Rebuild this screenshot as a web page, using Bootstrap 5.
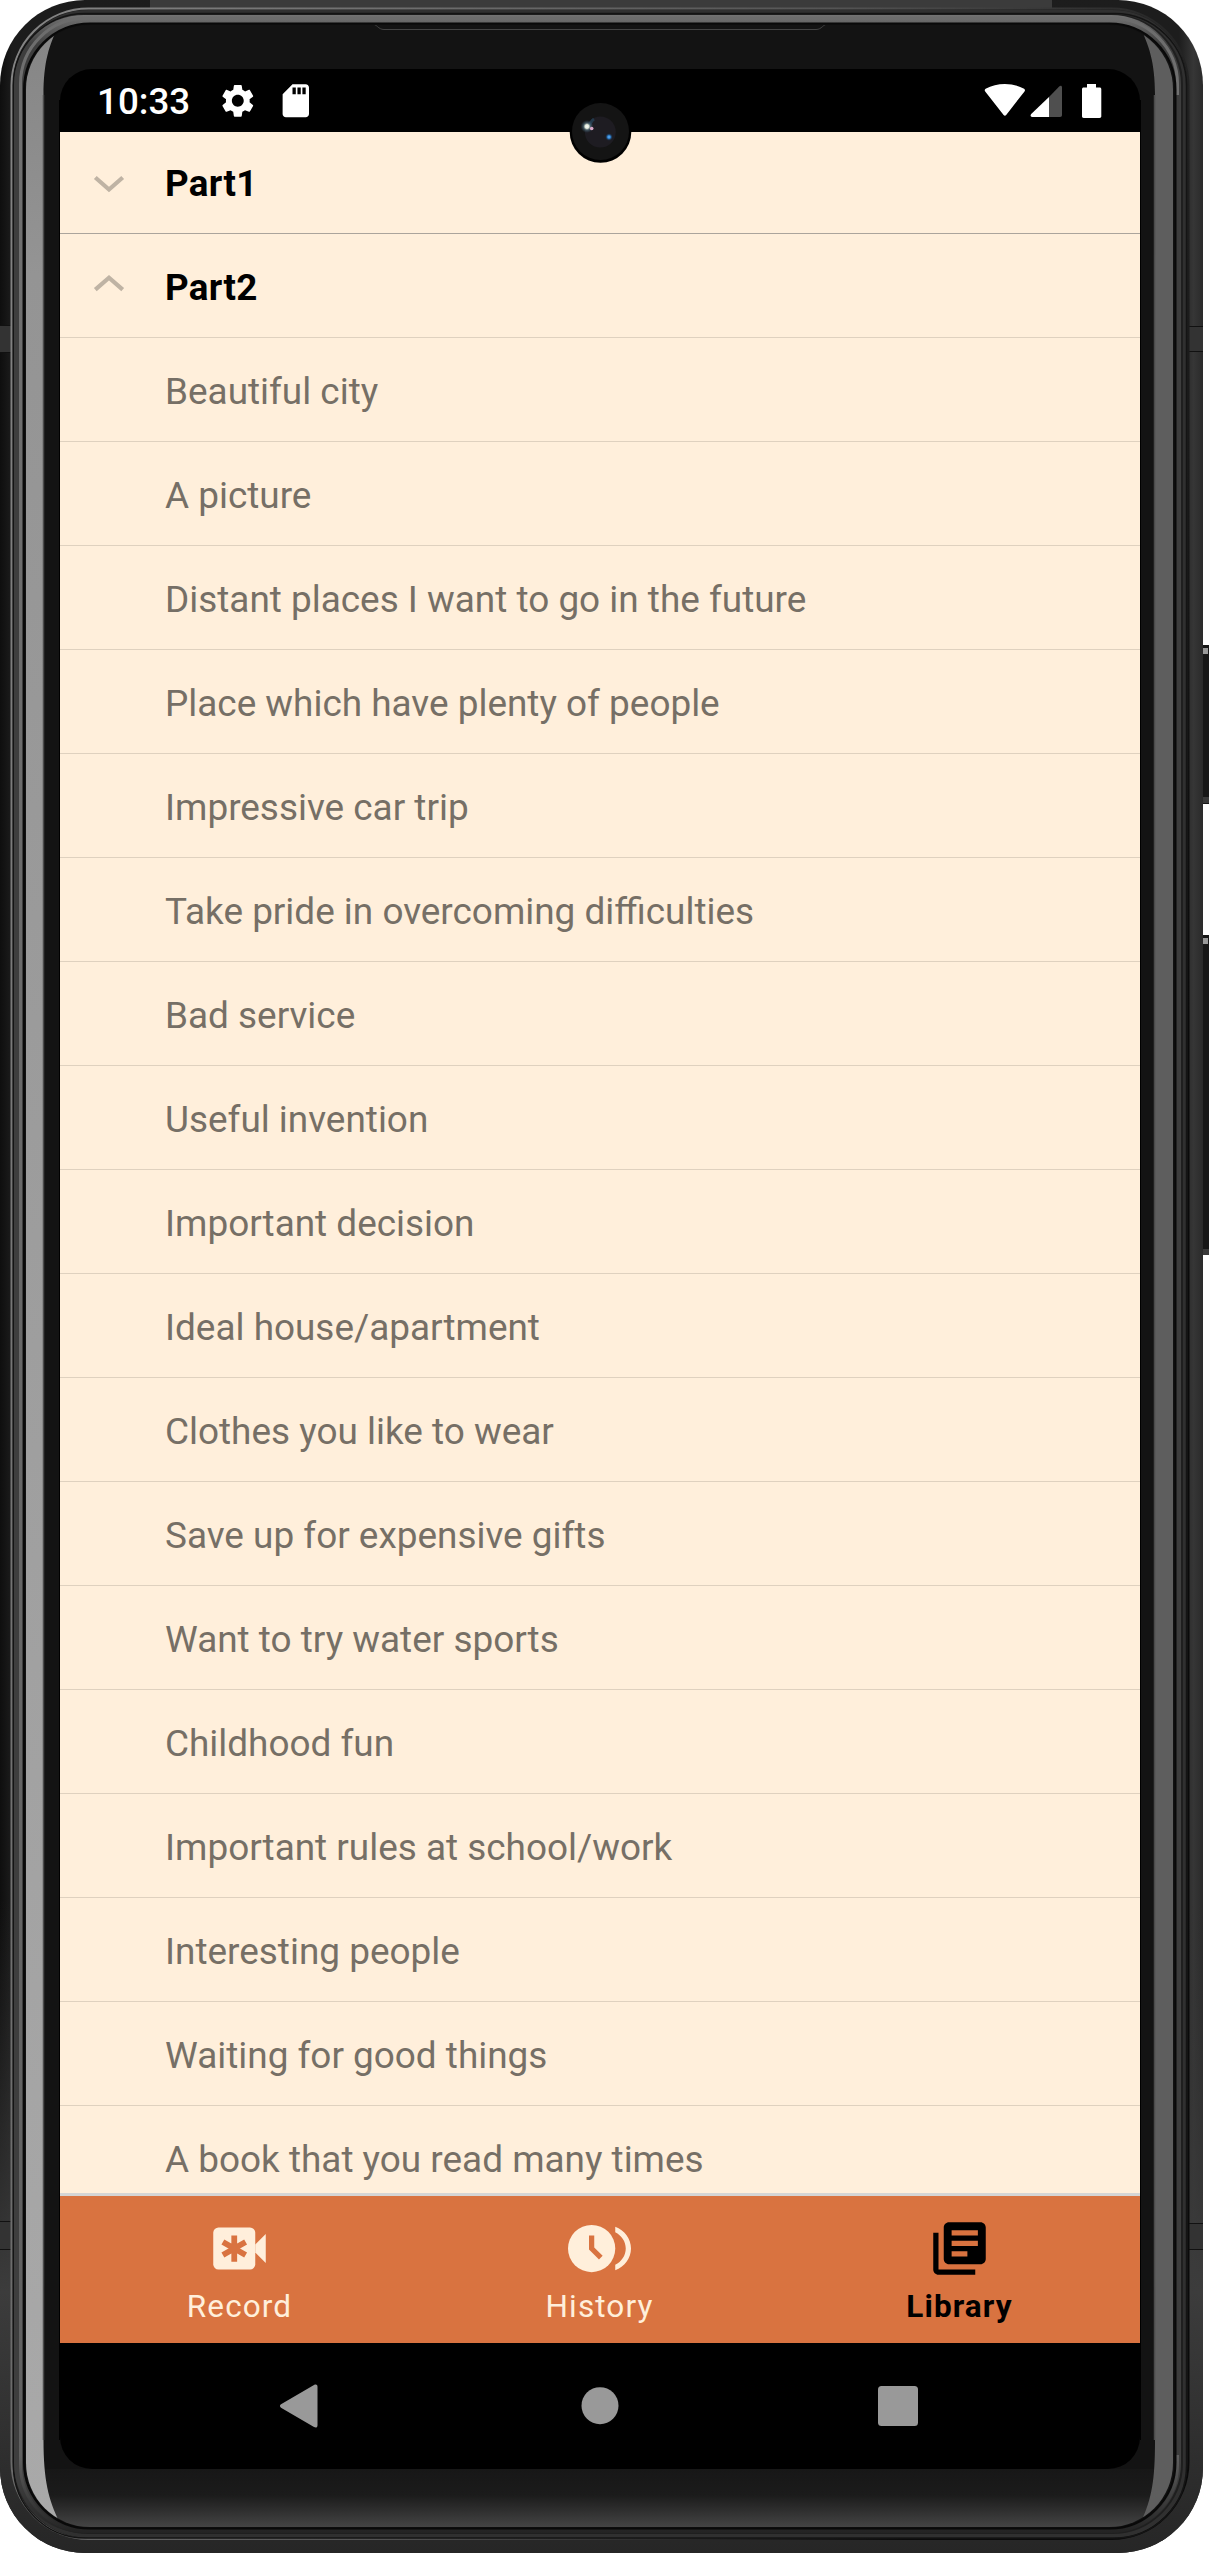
<!DOCTYPE html>
<html lang="en">
<head>
<meta charset="utf-8">
<meta name="viewport" content="width=device-width, initial-scale=1">
<title>Library</title>
<link rel="stylesheet" href="https://cdn.jsdelivr.net/npm/bootstrap@5.3.0/dist/css/bootstrap.min.css">
<style>
body{font-family:Roboto,sans-serif;background:#fff}
.device{width:1209px;height:2553px;padding:69px 69px 84px 60px}
.device-frame{z-index:0}
.screen{width:1080px;height:2400px;border-radius:32px;background:#000;z-index:1}
.status{height:63px;padding:0 38.5px 0 37px}
.clock{font-size:36.75px;font-weight:500;line-height:1;color:#fff;padding-top:4px}
.gear{margin-left:28px}
.sdcard{margin-left:18px}
.topics{background:#ffefdb;min-height:0}
.topics>li{height:104px;flex:none;border-bottom:1px solid #dfd1bf;padding:5px 0 0 105px;font-size:36.92px;color:#766f66;line-height:1}
.topics>li.part{color:#000;font-weight:700;padding-left:27px;font-size:36.75px;letter-spacing:.3px}
.topics>li.part svg{margin-right:36px}
.topics>li.part:first-child{height:102px;padding-top:3px;border-color:#aba49c}
.tabs{height:150px;border-top:3px solid #d5d5d5;background:#d97340}
.tabs .nav-link{color:#ffefdb;padding:20.5px 1px 0 0}
.tabs .nav-link.active{color:#000;font-weight:700}
.tab-label{font-size:31.5px;letter-spacing:1.1px;line-height:1;margin-top:11px}
.active .tab-label{letter-spacing:1.1px}
.sysnav{height:126px;padding:0 90px}
.camera{left:569px;top:101px;z-index:2}
</style>
</head>
<body>
<div class="device position-relative overflow-hidden">
<svg class="device-frame position-absolute top-0 start-0" width="1209" height="2553" viewBox="0 0 1209 2553" fill="none">
  <defs>
    <linearGradient id="body"><stop offset="0" stop-color="#0e0e0e"/><stop offset=".01" stop-color="#1c1c1c"/><stop offset=".98" stop-color="#1d1d1d"/><stop offset=".992" stop-color="#363636"/><stop offset="1" stop-color="#2a2a2a"/></linearGradient>
    <linearGradient id="low" x2="0" y2="1"><stop offset="0" stop-color="#333" stop-opacity="0"/><stop offset=".6" stop-color="#3c3c3c"/><stop offset="1" stop-color="#262626"/></linearGradient>
    <linearGradient id="edge" x2="1" y2=".4"><stop offset="0" stop-color="#858585"/><stop offset=".6" stop-color="#555"/><stop offset="1" stop-color="#0a0a0a"/></linearGradient>
    <linearGradient id="rim" x2="0" y2="1"><stop offset="0" stop-color="#737373"/><stop offset=".012" stop-color="#3e3e3e"/><stop offset=".98" stop-color="#3e3e3e"/><stop offset="1" stop-color="#222"/></linearGradient>
    <linearGradient id="ring" x2="0" y2="1"><stop offset="0" stop-color="#6c6c6c"/><stop offset=".03" stop-color="#707070"/><stop offset=".97" stop-color="#606060"/><stop offset="1" stop-color="#242424"/></linearGradient>
    <linearGradient id="glossL" x2="0" y2="1"><stop offset="0" stop-color="#858585"/><stop offset=".1" stop-color="#949494"/><stop offset="1" stop-color="#a9a9a9"/></linearGradient>
    <linearGradient id="chin" x2="0" y2="1"><stop offset="0" stop-color="#171717"/><stop offset=".45" stop-color="#1b1b1b"/><stop offset="1" stop-color="#444"/></linearGradient>
    <clipPath id="glass"><rect x="26" y="25" width="1147" height="2502" rx="64"/></clipPath>
    <clipPath id="shell"><rect width="1203" height="2553" rx="85"/></clipPath>
  </defs>
  <g id="buttons">
    <path fill="#171717" d="M1200 645h9v159h-9zM1200 935h9v320h-9z"/>
    <path fill="#999" d="M1203 648h5v6h-5zM1203 938h5v6h-5z"/>
    <path fill="#3a3a3a" d="M1201 797h8v6h-8zM1201 1249h8v6h-8z"/>
  </g>
  <g clip-path="url(#shell)">
    <path fill="url(#body)" d="M0 0h1203v2553H0z"/>
    <path fill="url(#low)" d="M0 1900h1203v653H0z"/>
    <path fill="#3b3b3b" d="M150 0h902v8H150z"/>
    <path fill="#333" d="M0 326h11v26H0zM1189 327h14v24h-14zM0 2222h11v27H0zM1189 2224h14v25h-14z"/>
    <path stroke="#111" d="M0 325.500h11M0 352.500h11M1189 326.500h14M1189 351.500h14M0 2221.500h11M0 2249.500h11M1189 2223.500h14M1189 2249.500h14"/>
  </g>
  <rect x="11.500" y="8.500" width="1177" height="2530.500" rx="77" fill="#1f1f1f" stroke="url(#edge)" stroke-width="2"/>
  <rect x="16" y="12" width="1169" height="2524" rx="73" stroke="#303030" stroke-width="4"/>
  <rect x="13.500" y="13.500" width="1173" height="2524.500" rx="72" stroke="#141414" stroke-width="1.500"/>
  <rect x="14" y="15" width="1167" height="2518" rx="70" fill="url(#rim)"/>
  <rect x="20.500" y="18" width="1157" height="2513" rx="66" stroke="url(#ring)" stroke-width="3"/>
  <path stroke="#3c3c3c" stroke-width="3.500" d="M1177.500 95V2455"/>
  <rect x="24" y="23.500" width="1151.500" height="2505" rx="66" fill="#121212" stroke="#090909" stroke-width="2"/>
  <g clip-path="url(#glass)">
    <path fill="#131313" d="M26 25h1147v2502H26z"/>
    <path fill="url(#chin)" d="M26 2469h1147v58H26z"/>
    <path fill="url(#glossL)" d="M26 25h33C49 45 43.500 62 43.500 95V2440c0 40 5 60 16 82H26z"/>
    <path fill="#5e5e5e" d="M1173 25h-34c10 20 16 37 16 70V2440c0 40-3 58-14 82h32z"/>
    <path stroke="#4b4b4b" stroke-width="1.500" d="M43.500 95V2440M1154.500 95V2440"/>
    <path stroke="#444" d="M372 24c5 0 6 5.500 12 5.500h432c6 0 7-5.500 12-5.500"/>
  </g>
  <path stroke="#000" d="M59.500 100V2440M1140.500 100V2440"/>
</svg>

<main class="screen position-relative d-flex flex-column overflow-hidden">
  <header class="status d-flex align-items-center justify-content-between flex-shrink-0">
    <div class="d-flex align-items-center">
      <span class="clock">10:33</span>
      <svg class="gear" width="39.600" height="39.600" viewBox="0 0 24 24" fill="#fff"><path d="M19.140 12.940c.04-.3.060-.61.060-.94 0-.32-.02-.64-.07-.94l2.030-1.580c.18-.14.230-.41.120-.61l-1.920-3.320c-.12-.22-.37-.29-.59-.22l-2.390.96c-.5-.38-1.030-.7-1.620-.94l-.36-2.540c-.04-.24-.24-.41-.48-.41h-3.840c-.24 0-.43.170-.47.410l-.36 2.540c-.59.240-1.130.570-1.620.940l-2.390-.96c-.22-.08-.47 0-.59.220L2.740 8.870c-.12.210-.08.470.120.610l2.030 1.580c-.05.300-.09.630-.09.940s.02.640.070.940l-2.030 1.580c-.18.140-.23.410-.12.610l1.920 3.320c.12.220.37.290.59.220l2.390-.96c.5.380 1.030.700 1.620.940l.36 2.540c.05.240.24.410.48.410h3.840c.24 0 .44-.17.470-.41l.36-2.540c.59-.24 1.130-.56 1.620-.94l2.390.96c.22.080.47 0 .59-.22l1.920-3.320c.12-.22.070-.47-.12-.61l-2.010-1.580zM12 15.600c-1.980 0-3.600-1.620-3.600-3.600s1.620-3.600 3.600-3.600 3.600 1.620 3.600 3.600-1.620 3.600-3.600 3.600z"/></svg>
      <svg class="sdcard" width="39.600" height="39.600" viewBox="0 0 24 24" fill="#fff"><path d="M18 2h-8L4.020 8 4 20c0 1.100.9 2 2 2h12c1.100 0 2-.9 2-2V4c0-1.100-.9-2-2-2zm-6 6h-2V4h2v4zm3 0h-2V4h2v4zm3 0h-2V4h2v4z"/></svg>
    </div>
    <svg width="118" height="36" viewBox="984 82 118 36"><path fill="#fff" d="M985.200 90.500c-.8-1-.6-2 .4-2.700 11.400-6.400 27.100-6.400 38.500 0 1 .7 1.200 1.700.4 2.700l-18.300 23.400c-.8 1-1.800 1-2.600 0z"/><path fill="#4f4f4f" d="M1049 96l10.200-10.600c1.400-1.100 2.800-.6 2.800 1V114c0 1.300-.7 2-2 2h-11z"/><path fill="#fff" d="M1049 96v20h-16.500c-2 0-2.500-1.500-1.300-2.900z"/><path fill="#fff" d="M1087 83h9v3.500h3.500c1.200 0 1.800.6 1.800 1.800v27c0 1.200-.6 1.700-1.800 1.700h-15.700c-1.200 0-1.800-.5-1.800-1.700v-27c0-1.200.6-1.800 1.800-1.800h3.200z"/></svg>
  </header>

  <ul class="topics list-unstyled mb-0 flex-grow-1 d-flex flex-column overflow-hidden">
    <li class="part d-flex align-items-center"><svg width="42" height="42" fill="none" stroke="#bfb3a4" stroke-width="4.200"><path d="M8.300 14.500 22 26.500l13.700-12"/></svg>Part1</li>
    <li class="part d-flex align-items-center"><svg width="42" height="42" fill="none" stroke="#bfb3a4" stroke-width="4.200"><path d="M8.300 22.700 22 10.700l13.700 12"/></svg>Part2</li>
    <li class="d-flex align-items-center">Beautiful city</li>
    <li class="d-flex align-items-center">A picture</li>
    <li class="d-flex align-items-center">Distant places I want to go in the future</li>
    <li class="d-flex align-items-center">Place which have plenty of people</li>
    <li class="d-flex align-items-center">Impressive car trip</li>
    <li class="d-flex align-items-center">Take pride in overcoming difficulties</li>
    <li class="d-flex align-items-center">Bad service</li>
    <li class="d-flex align-items-center">Useful invention</li>
    <li class="d-flex align-items-center">Important decision</li>
    <li class="d-flex align-items-center">Ideal house/apartment</li>
    <li class="d-flex align-items-center">Clothes you like to wear</li>
    <li class="d-flex align-items-center">Save up for expensive gifts</li>
    <li class="d-flex align-items-center">Want to try water sports</li>
    <li class="d-flex align-items-center">Childhood fun</li>
    <li class="d-flex align-items-center">Important rules at school/work</li>
    <li class="d-flex align-items-center">Interesting people</li>
    <li class="d-flex align-items-center">Waiting for good things</li>
    <li class="d-flex align-items-center">A book that you read many times</li>
  </ul>

  <nav class="tabs nav nav-justified flex-nowrap align-items-stretch flex-shrink-0">
    <a class="nav-link d-flex flex-column align-items-center" href="#"><svg width="63" height="63" viewBox="0 0 24 24" fill="currentColor"><rect x="2" y="4" width="16" height="16" rx="2"/><path d="m18 10.500 4-4v11l-4-4z"/><path stroke="#d97340" stroke-width="2.200" d="M10 7v10M5.670 9.500l8.660 5M5.670 14.500l8.660-5"/></svg><span class="tab-label">Record</span></a>
    <a class="nav-link d-flex flex-column align-items-center" href="#"><svg width="63" height="63" viewBox="0 0 24 24" fill="currentColor"><circle cx="9" cy="12" r="9"/><path d="M18 3.700c3.500 1.300 6 4.600 6 8.300s-2.500 7-6 8.300v-2.100c2.400-1.200 4-3.500 4-6.200s-1.600-5-4-6.200z"/><path fill="#d97340" d="M8 7h2v4.600l3.200 3.200-1.400 1.400L8 12.400z"/></svg><span class="tab-label">History</span></a>
    <a class="nav-link active d-flex flex-column align-items-center" href="#"><svg width="63" height="63" viewBox="0 0 24 24" fill="currentColor"><path d="M4 6H2v14c0 1.100.9 2 2 2h14v-2H4V6zm16-4H8c-1.100 0-2 .9-2 2v12c0 1.100.9 2 2 2h12c1.100 0 2-.9 2-2V4c0-1.100-.9-2-2-2zm-1 5H9V5h10v2zm-4 8H9v-2h6v2zm4-4H9V9h10v2z"/></svg><span class="tab-label">Library</span></a>
  </nav>

  <div class="sysnav d-flex align-items-center flex-shrink-0">
    <div class="w-100 d-flex justify-content-center"><svg width="42" height="44" viewBox="0 0 42 44" fill="#999"><path d="M2 20.300 35 1c2-1 3.500-.4 3.500 1.800v38.400c0 2.200-1.500 2.800-3.500 1.800L2 23.700c-1.400-.9-1.400-2.500 0-3.400z"/></svg></div>
    <div class="w-100 d-flex justify-content-center"><svg width="39" height="38"><circle cx="19" cy="18.700" r="18.500" fill="#999"/></svg></div>
    <div class="w-100 d-flex justify-content-center"><svg width="44" height="40"><rect width="40" height="40" rx="3.500" fill="#999"/></svg></div>
  </div>
</main>

<svg class="camera position-absolute" width="63" height="63" viewBox="0 0 63 63">
  <defs><radialGradient id="glint"><stop offset="0" stop-color="#fff"/><stop offset=".3" stop-color="#dfe8d8"/><stop offset=".55" stop-color="#56707c" stop-opacity=".7"/><stop offset="1" stop-color="#2a4a60" stop-opacity="0"/></radialGradient><radialGradient id="blue"><stop offset="0" stop-color="#6bbcff"/><stop offset=".4" stop-color="#2f7ac4"/><stop offset="1" stop-color="#123" stop-opacity="0"/></radialGradient></defs>
  <circle cx="31.500" cy="31" r="30.800" fill="#000"/>
  <circle cx="31.500" cy="30.500" r="28.500" fill="#141414"/>
  <circle cx="31.300" cy="31" r="15.500" fill="#1e1c22"/>
  <path d="M20 27c1-5 2-7 5-9" stroke="#25465c" stroke-width="3" fill="none" opacity=".7"/>
  <circle cx="18" cy="25.500" r="6.500" fill="url(#glint)"/>
  <circle cx="22.700" cy="27.500" r="1.800" fill="#d8a8c8"/>
  <circle cx="40" cy="36" r="4" fill="url(#blue)"/>
</svg>
</div>
<script src="https://cdn.jsdelivr.net/npm/bootstrap@5.3.0/dist/js/bootstrap.bundle.min.js"></script>
</body>
</html>
